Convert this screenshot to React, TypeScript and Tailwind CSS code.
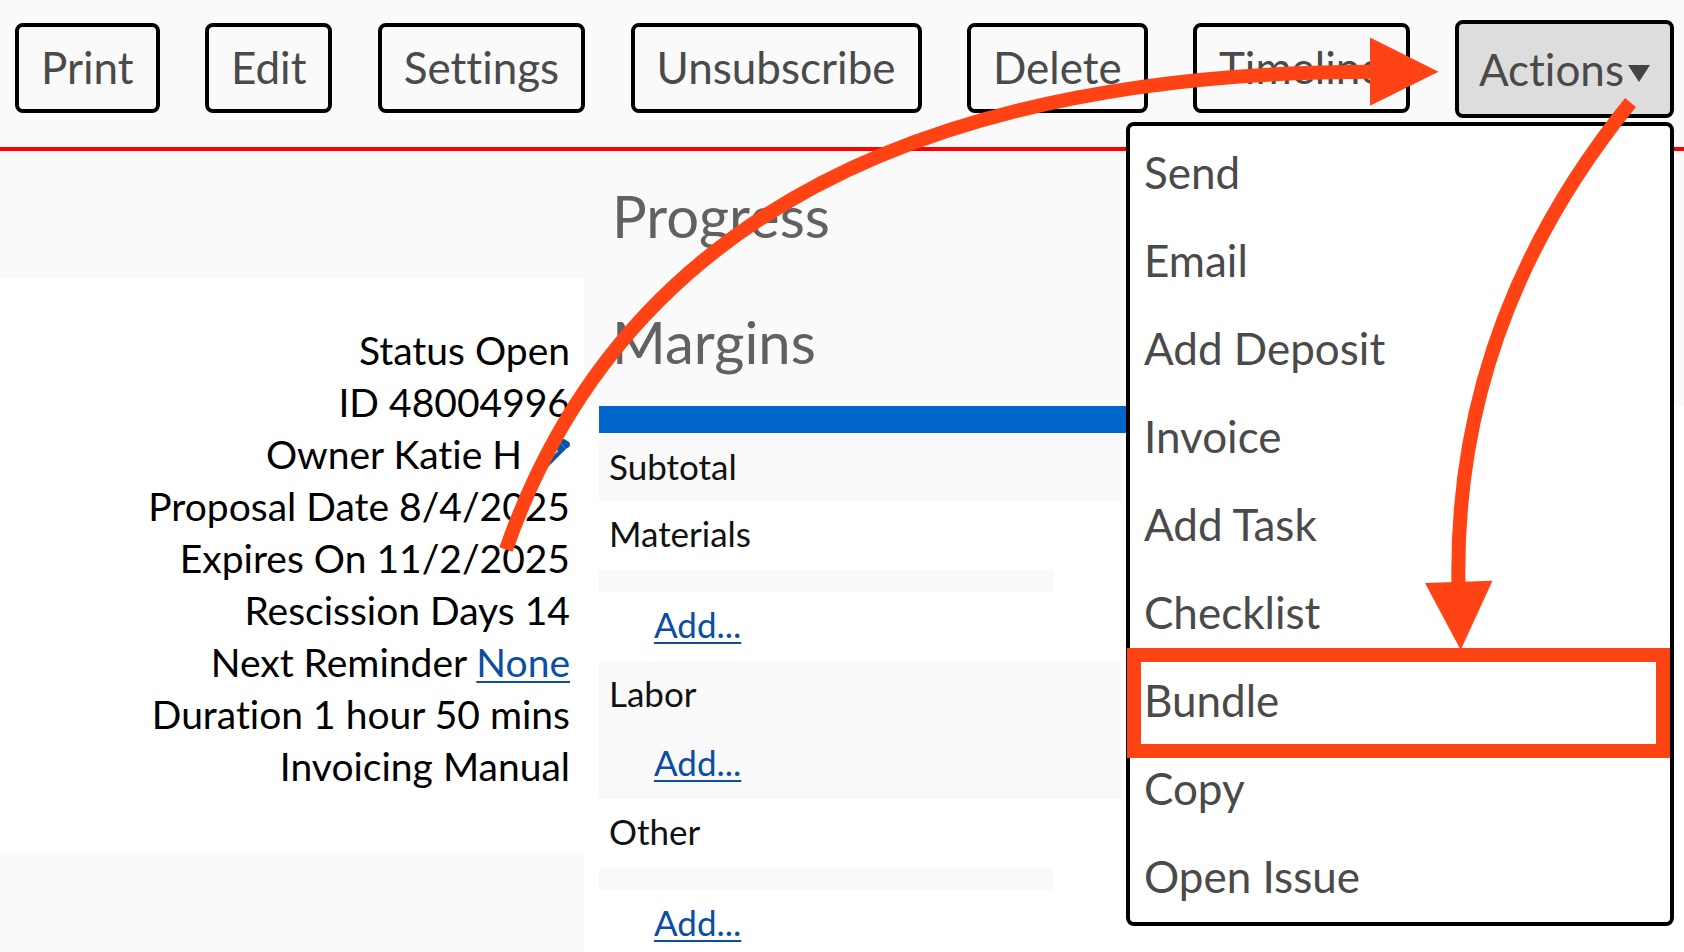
import React from 'react';

const BUTTONS = ['Print', 'Edit', 'Settings', 'Unsubscribe', 'Delete', 'Timeline'];

const MENU_ITEMS = [
  'Send',
  'Email',
  'Add Deposit',
  'Invoice',
  'Add Task',
  'Checklist',
  'Bundle',
  'Copy',
  'Open Issue',
];

const DETAILS = [
  { label: 'Status', value: 'Open' },
  { label: 'ID', value: '48004996' },
  { label: 'Owner', value: 'Katie H', editable: true },
  { label: 'Proposal Date', value: '8/4/2025' },
  { label: 'Expires On', value: '11/2/2025' },
  { label: 'Rescission Days', value: '14' },
  { label: 'Next Reminder', value: 'None', link: true },
  { label: 'Duration', value: '1 hour 50 mins' },
  { label: 'Invoicing', value: 'Manual' },
];

const SECTIONS = [
  { name: 'Materials', divider: true, shaded: false },
  { name: 'Labor', divider: false, shaded: true },
  { name: 'Other', divider: true, shaded: false },
];

function PencilIcon() {
  return (
    <svg viewBox="0 0 40 40" className="size-10" aria-hidden="true">
      <path d="M1 37 4 26 28 2 36 10 12 34Z" fill="#0655a8" />
      <path d="M28 2 30 0Q33-1 36 1L39 3Q41 6 39 8L36 10Z" fill="#0655a8" />
      <path d="M10 28 27 11" stroke="#fff" strokeWidth="3" />
    </svg>
  );
}

function ActionsMenu() {
  return (
    <ul className="absolute top-[102px] right-0 z-10 w-[548px] rounded-lg border-4 border-black bg-white py-0.5">
      {MENU_ITEMS.map((item) => (
        <li key={item} className="relative">
          <button className="block w-full px-3.5 text-left text-[44px] leading-[88px] text-[#4a4a4a]">
            {item}
          </button>
          {item === 'Bundle' && (
            <span className="pointer-events-none absolute -top-2 -bottom-3.5 -left-[3px] right-0 border-14 border-[#ff4314]" />
          )}
        </li>
      ))}
    </ul>
  );
}

// hand-drawn guide arrows on top of the page
function Arrows() {
  return (
    <svg
      width="1684"
      height="952"
      viewBox="0 0 1684 952"
      className="pointer-events-none absolute top-0 left-0 z-20 max-w-none"
      aria-hidden="true"
    >
      <g fill="none" stroke="#ff4314" strokeWidth="14">
        <path d="M506 549.5Q672 72 1374 71.7" />
        <path d="M1630.5 102.5Q1453 322 1458.5 586" />
      </g>
      <g fill="#ff4314">
        <path d="M1370 37.5 1438.5 71.7 1370 105.7Z" />
        <path d="M1425 583 1492.5 580.7 1460.7 650Z" />
      </g>
    </svg>
  );
}

export default function App() {
  return (
    <div className="relative h-screen overflow-hidden bg-white font-['Lato',sans-serif] [font-variant-ligatures:none]">
      <header className="flex items-center justify-between border-b-4 border-[#ff0000] bg-[#fafafa] pt-5 pr-2.5 pb-[29px] pl-[15px]">
        {BUTTONS.map((label) => (
          <button
            key={label}
            className="mb-0.5 h-[90px] rounded-lg border-4 border-black px-[22px] pb-0.5 text-[44px] leading-none text-[#4a4a4a]"
          >
            {label}
          </button>
        ))}
        <div className="relative">
          <button className="flex h-[98px] items-center gap-1 rounded-lg border-4 border-black bg-[#ddd] px-5 text-[44px] leading-none text-[#4a4a4a]">
            Actions
            <svg viewBox="0 0 22 17" className="mt-2 h-[17px] w-[22px]" aria-hidden="true">
              <path d="M0 0H22L11 17Z" fill="#444" />
            </svg>
          </button>
          <ActionsMenu />
        </div>
      </header>

      <main className="flex">
        <aside className="w-[584px] shrink-0 bg-[#fafafa] pt-[127px] pb-[100px]">
          <ul className="bg-white pt-[46px] pr-3.5 pb-[60px] text-right text-[39px] leading-[52px] text-black">
            {DETAILS.map((d) => (
              <li key={d.label}>
                {d.label}{' '}
                {d.link ? (
                  <a href="#" className="text-[#0b4ea2] underline decoration-2 underline-offset-4">
                    {d.value}
                  </a>
                ) : (
                  d.value
                )}
                {d.editable && (
                  <button aria-label="Edit owner" className="ml-2 align-middle">
                    <PencilIcon />
                  </button>
                )}
              </li>
            ))}
          </ul>
        </aside>

        <section className="min-w-0 flex-1">
          <div className="bg-[#fafafa] px-7 pt-0.5 pb-px text-[58px] leading-[126px] text-[#636060]">
            <h2>Progress</h2>
            <h2>Margins</h2>
          </div>
          <div className="pr-2.5 pl-[15px]">
            <div className="h-[27px] bg-[#0066cc]" />
            <table className="mt-0.5 w-[523px] text-left text-[35px] text-[#111]">
              <tbody>
                <tr className="bg-[#f9f9f9]">
                  <th className="pb-1 pl-2.5 leading-[62px] font-normal">Subtotal</th>
                </tr>
              </tbody>
              {SECTIONS.map((s) => (
                <tbody key={s.name} className={s.shaded ? 'bg-[#f9f9f9]' : ''}>
                  <tr>
                    <th className="pb-1 pl-2.5 leading-[65px] font-normal">{s.name}</th>
                  </tr>
                  {s.divider && (
                    <tr>
                      <td>
                        <div className="mr-[69px] h-[22px] bg-[#f9f9f9]" />
                      </td>
                    </tr>
                  )}
                  <tr>
                    <td className="pb-1 pl-[55px] leading-[65px]">
                      <a href="#" className="text-[#0b4ea2] underline decoration-2 underline-offset-4">
                        Add...
                      </a>
                    </td>
                  </tr>
                </tbody>
              ))}
            </table>
          </div>
        </section>
      </main>

      <Arrows />
    </div>
  );
}
